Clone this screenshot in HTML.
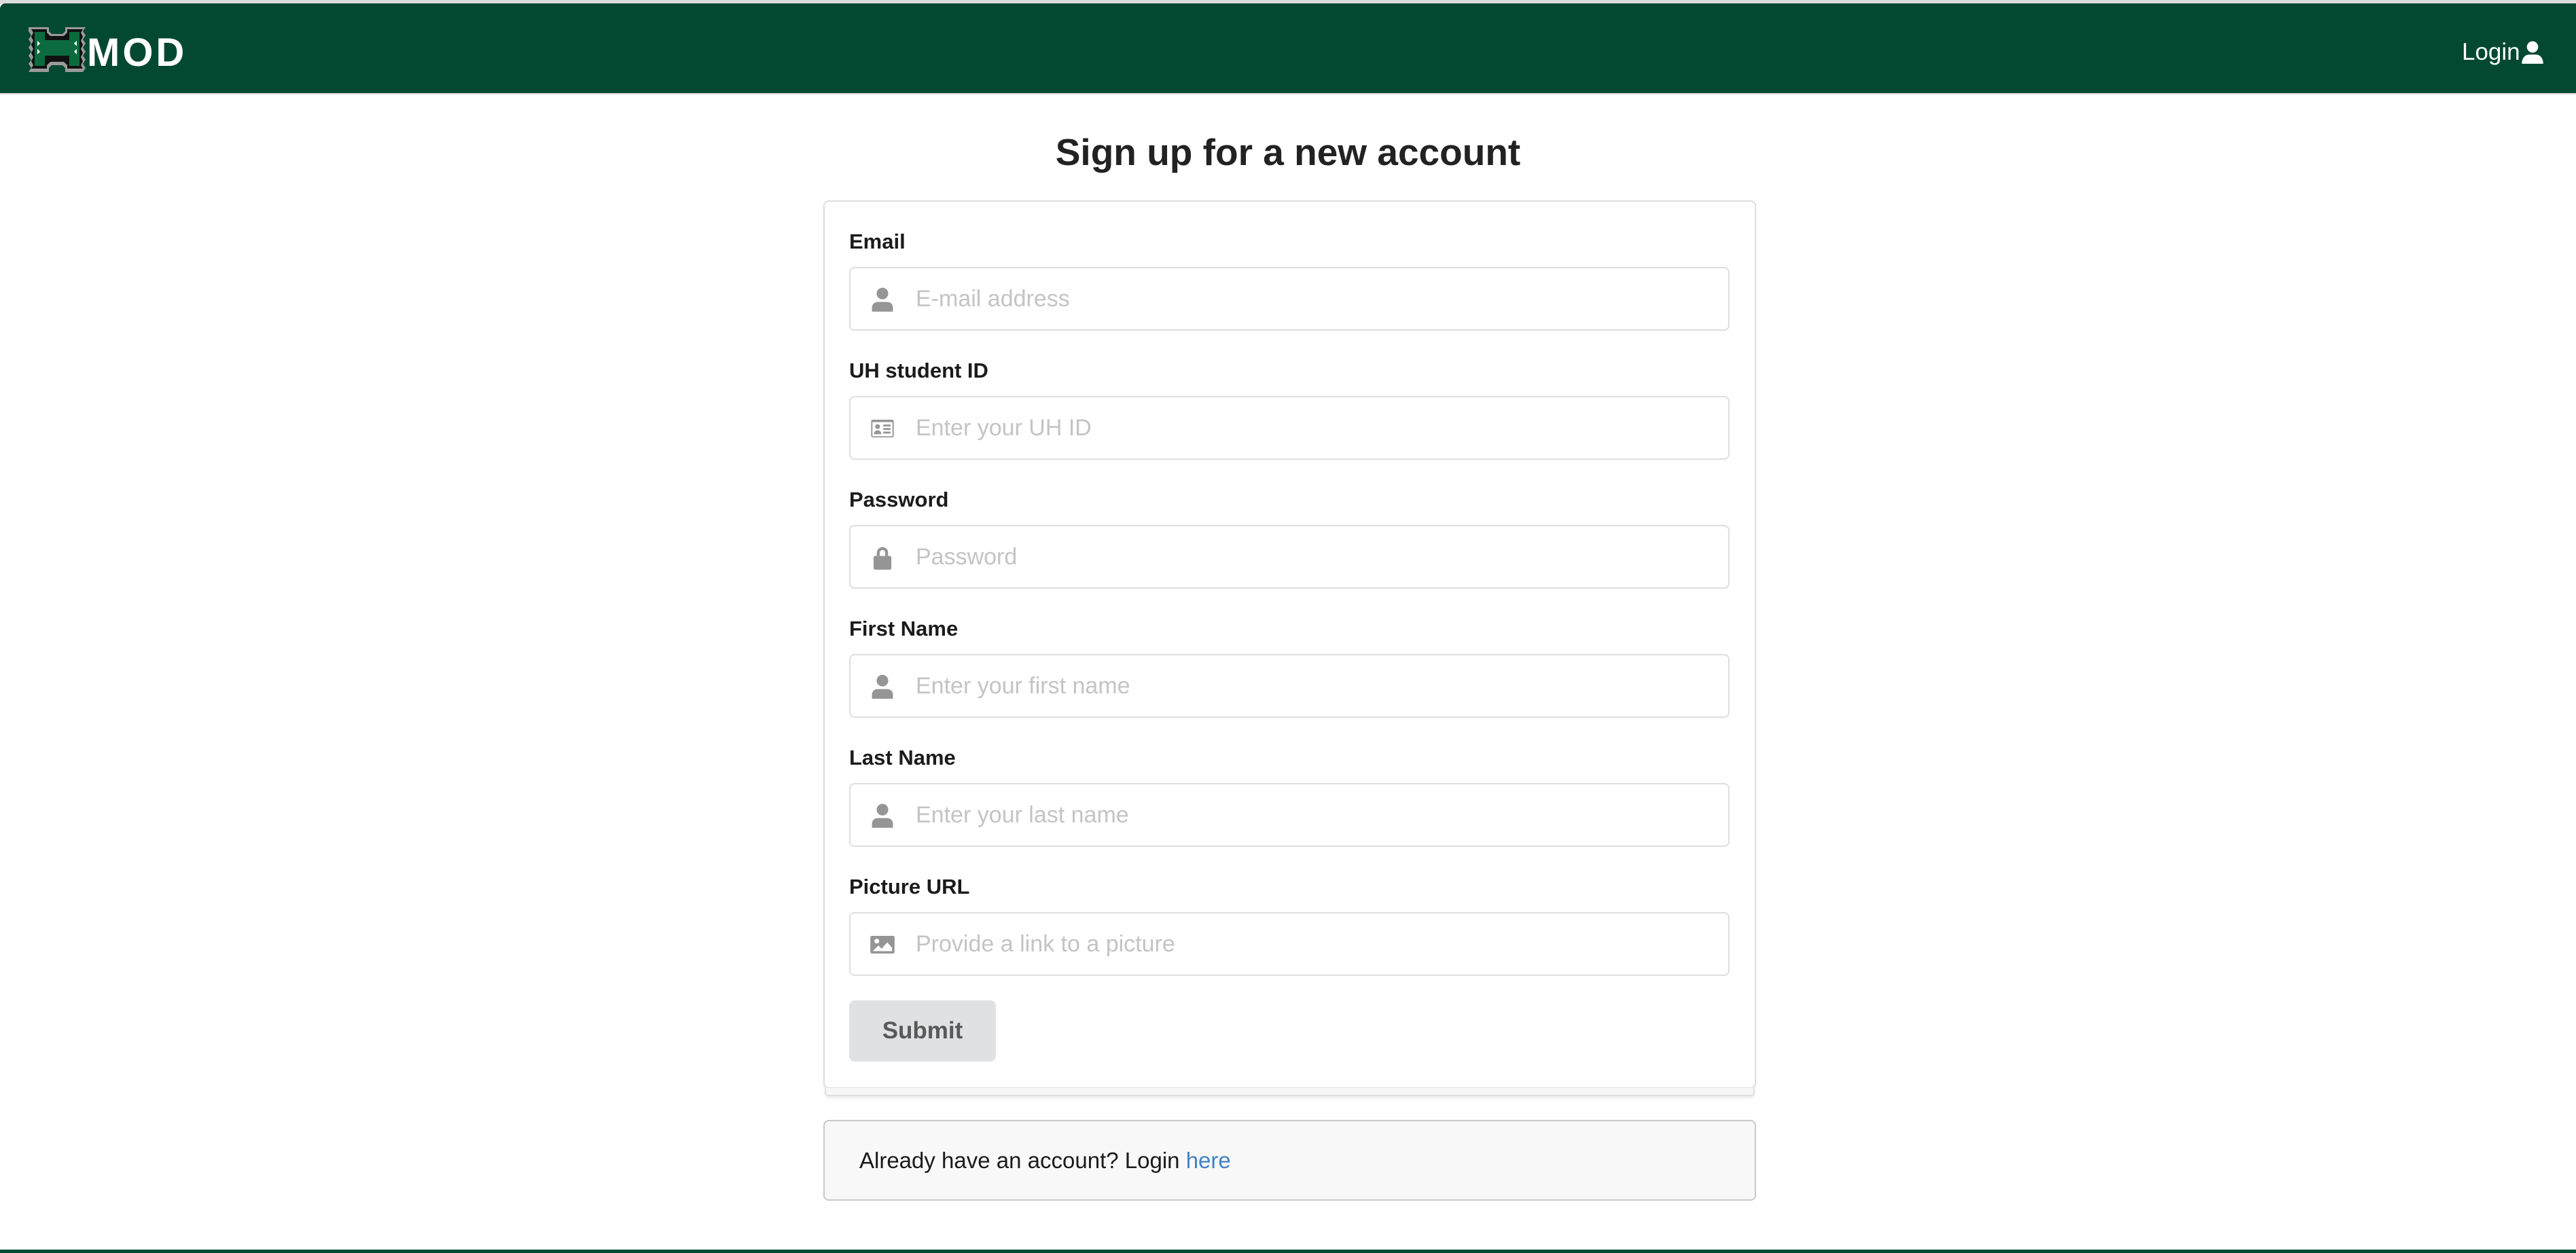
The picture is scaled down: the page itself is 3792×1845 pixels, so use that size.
<!DOCTYPE html>
<html><head><meta charset="utf-8"><style>
*{margin:0;padding:0;box-sizing:border-box}
html,body{width:3792px;height:1845px;overflow:hidden;background:#fff;font-family:"Liberation Sans",sans-serif;position:relative}
.top{position:absolute;left:0;top:0;width:3792px;height:6px;background:#dcdcdc}
.nav{position:absolute;left:0;top:5px;width:3792px;height:134px;background:#034931;border-radius:8px 0 0 0;border-bottom:2px solid #d5d5d5}
.mod{position:absolute;left:128px;top:38px;font-size:58px;font-weight:bold;color:#fff;line-height:70px;letter-spacing:4px}
.login{position:absolute;left:3624px;top:50px;font-size:35px;color:#fff;line-height:44px}
h1{position:absolute;left:0;width:3792px;top:188px;text-align:center;font-size:55px;font-weight:bold;color:#222;line-height:72px}
.card{position:absolute;left:1212px;top:295px;width:1373px;height:1308px;border:2px solid #dededf;border-radius:8px;background:#fff;box-shadow:0 2px 3px rgba(0,0,0,.08)}
.seg{position:absolute;left:1214px;top:1602px;width:1369px;height:12px;border:2px solid #dededf;border-top:none;border-radius:0 0 6px 6px;background:#f7f7f7;box-shadow:0 3px 4px rgba(0,0,0,.08)}
.lbl{position:absolute;left:1250px;font-size:31px;font-weight:bold;color:#1b1b1b;line-height:36px}
.inp{position:absolute;left:1250px;width:1296px;height:94px;border:2px solid #dededf;border-radius:8px;background:#fff}
.inp svg{position:absolute;left:28px;top:27px}
.ph{position:absolute;left:96px;top:0;line-height:90px;font-size:34px;color:#c4c4c4}
.btn{position:absolute;left:1250px;top:1473px;width:216px;height:90px;background:#e0e1e2;border-radius:8px;text-align:center;line-height:90px;font-size:35px;font-weight:bold;color:#595959}
.msg{position:absolute;left:1212px;top:1649px;width:1373px;height:119px;background:#f8f8f8;border:2px solid #c9c9c9;border-radius:8px;font-size:33px;color:#1b1b1b;line-height:115px;padding-left:51px}
.msg span{color:#4183c4}
.foot{position:absolute;left:0;top:1840px;width:3792px;height:5px;background:#034931}
</style></head><body>
<div class="top"></div>
<div class="nav">
<svg style="position:absolute;left:40px;top:32px" width="88" height="70" viewBox="0 0 88 68">
<path d="M2 2h30v6l4 4h16l4-4V2h30l-4 6 4 6-4 6 4 6-4 6 4 6-4 6 4 6-4 6 4 6-4 6v0H56v-6l-4-4H36l-4 4v6H2l4-6-4-6 4-6-4-6 4-6-4-6 4-6-4-6 4-6-4-6z" fill="#9a9a9a"/>
<path d="M6 5h23v5l5 5h20l5-5V5h23l-3 5 3 6-3 6 3 6-3 6 3 6-3 6 3 6-3 6 3 5H59v-5l-5-5H34l-5 5v5H6l3-5-3-6 3-6-3-6 3-6-3-6 3-6-3-6 3-6z" fill="#111"/>
<path d="M11 9h15v12h36V9h15v50H62V44H26v15H11z" fill="#0b6b3f"/>
<path d="M15 22l4 4-4 4zM15 34l4 4-4 4zM73 22l-4 4 4 4zM73 34l-4 4 4 4z" fill="#fff"/>
</svg>
<div class="mod">MOD</div>
<div class="login">Login<svg style="position:absolute;left:86px;top:4px" width="36" height="36" viewBox="0 0 16 16"><circle cx="8" cy="4.5" r="3.7" fill="#fff"/><path d="M1 15.5c0-4 2.5-6 4.5-6h5c2 0 4.5 2 4.5 6z" fill="#fff"/></svg></div>
</div>
<h1>Sign up for a new account</h1>
<div class="card"></div>
<div class="seg"></div>

<div class="lbl" style="top:338px">Email</div>
<div class="inp" style="top:393px"><svg width="38" height="38" viewBox="0 0 16 16"><circle cx="8" cy="4.3" r="3.6" fill="#959595"/><path d="M1.5 15.5v-2.5c0-2 1.5-3.5 3.5-3.5h6c2 0 3.5 1.5 3.5 3.5v2.5z" fill="#959595"/></svg><div class="ph">E-mail address</div></div>

<div class="lbl" style="top:528px">UH student ID</div>
<div class="inp" style="top:583px"><svg width="38" height="38" viewBox="0 0 16 16"><rect x="1" y="2.5" width="14" height="11" rx="1" fill="#959595"/><rect x="1.8" y="4" width="12.4" height="8.8" fill="#fff"/><circle cx="5" cy="6.8" r="1.5" fill="#959595"/><path d="M2.7 11.5c0-1.5.9-2.4 2.3-2.4s2.3.9 2.3 2.4z" fill="#959595"/><rect x="8.5" y="5.5" width="4.5" height="1.2" fill="#959595"/><rect x="8.5" y="7.7" width="4.5" height="1.2" fill="#959595"/><rect x="8.5" y="9.9" width="4.5" height="1.2" fill="#959595"/></svg><div class="ph">Enter your UH ID</div></div>

<div class="lbl" style="top:718px">Password</div>
<div class="inp" style="top:773px"><svg width="38" height="38" viewBox="0 0 16 16"><path d="M4.5 7V5a3.5 3.5 0 0 1 7 0v2h-1.8V5a1.7 1.7 0 0 0-3.4 0v2z" fill="#959595"/><rect x="2.5" y="7" width="11" height="8.5" rx="1" fill="#959595"/></svg><div class="ph">Password</div></div>

<div class="lbl" style="top:908px">First Name</div>
<div class="inp" style="top:963px"><svg width="38" height="38" viewBox="0 0 16 16"><circle cx="8" cy="4.3" r="3.6" fill="#959595"/><path d="M1.5 15.5v-2.5c0-2 1.5-3.5 3.5-3.5h6c2 0 3.5 1.5 3.5 3.5v2.5z" fill="#959595"/></svg><div class="ph">Enter your first name</div></div>

<div class="lbl" style="top:1098px">Last Name</div>
<div class="inp" style="top:1153px"><svg width="38" height="38" viewBox="0 0 16 16"><circle cx="8" cy="4.3" r="3.6" fill="#959595"/><path d="M1.5 15.5v-2.5c0-2 1.5-3.5 3.5-3.5h6c2 0 3.5 1.5 3.5 3.5v2.5z" fill="#959595"/></svg><div class="ph">Enter your last name</div></div>

<div class="lbl" style="top:1288px">Picture URL</div>
<div class="inp" style="top:1343px"><svg width="38" height="38" viewBox="0 0 16 16"><rect x="0.5" y="2.5" width="15" height="11" rx="1" fill="#959595"/><circle cx="4.5" cy="5.8" r="1.5" fill="#fff"/><path d="M2 12l3.5-3.5 2 2 3.5-4 3 3.5V12z" fill="#fff"/></svg><div class="ph">Provide a link to a picture</div></div>

<div class="btn">Submit</div>
<div class="msg">Already have an account? Login <span>here</span></div>
<div class="foot"></div>
</body></html>
